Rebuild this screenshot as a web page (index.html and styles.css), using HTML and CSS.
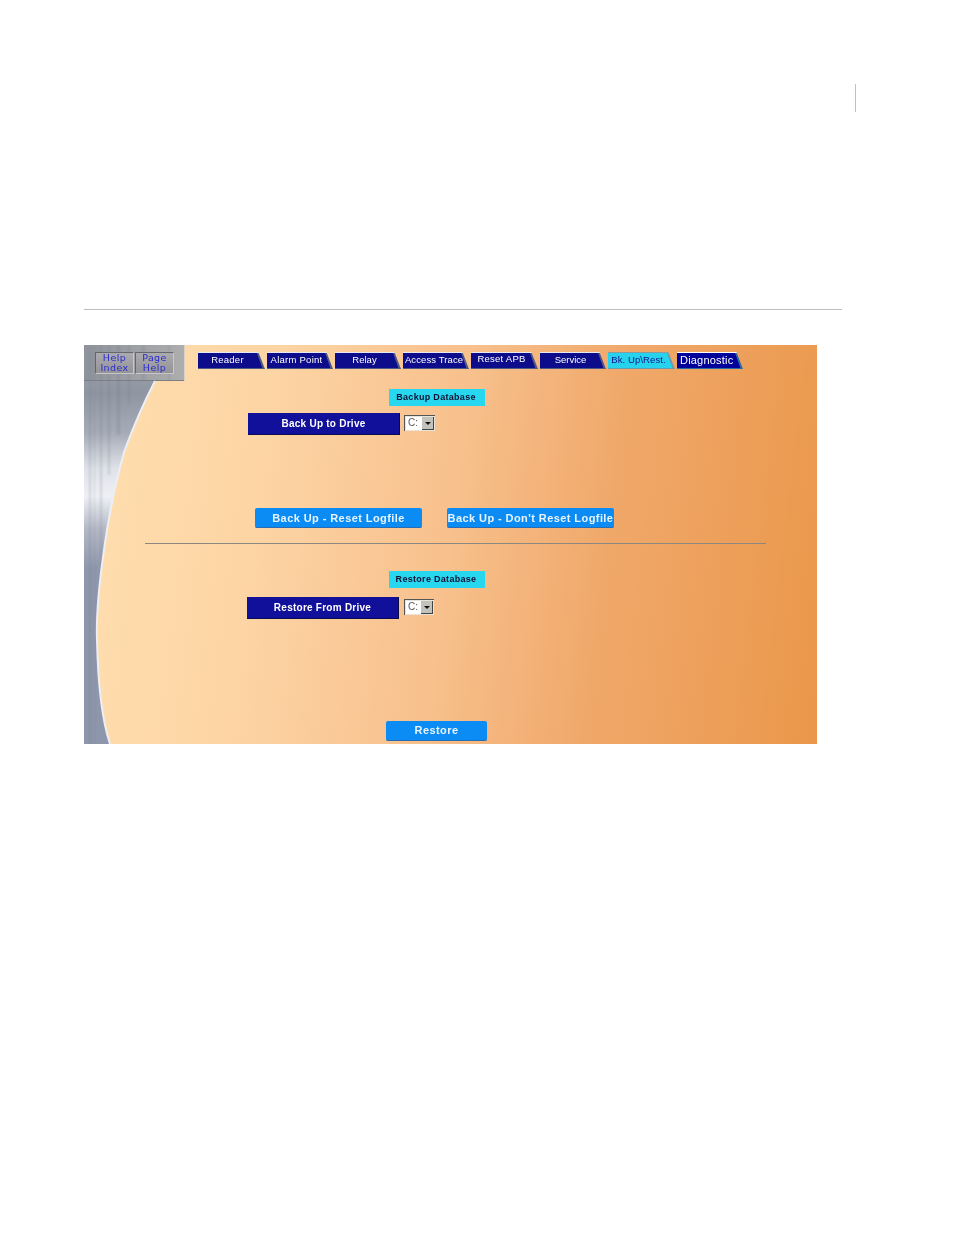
FILE: index.html
```html
<!DOCTYPE html>
<html lang="en">
<head>
  <meta charset="UTF-8">
  <title>Backup Database</title>
  <link rel="stylesheet" href="styles.css">
</head>
<body>
  <div class="page">
    <div class="page-tick"></div>
    <div class="page-rule"></div>

    <div class="panel">
      <!-- brushed metal strip behind the content -->
      <svg class="metal" width="733" height="399" viewBox="0 0 733 399">
        <defs>
          <linearGradient id="steel" x1="0" y1="0" x2="0" y2="1">
            <stop offset="0" stop-color="#a4a8ad"/>
            <stop offset="0.12" stop-color="#8f96a2"/>
            <stop offset="0.22" stop-color="#a5abb7"/>
            <stop offset="0.31" stop-color="#dfe2e8"/>
            <stop offset="0.38" stop-color="#eef0f4"/>
            <stop offset="0.46" stop-color="#b4b9c6"/>
            <stop offset="0.56" stop-color="#8f97ac"/>
            <stop offset="1" stop-color="#8e96ab"/>
          </linearGradient>
          <linearGradient id="cap" x1="0" y1="0" x2="1" y2="0">
            <stop offset="0" stop-color="#8f949c"/>
            <stop offset="0.6" stop-color="#a0a2a6"/>
            <stop offset="1" stop-color="#aeaeae"/>
          </linearGradient>
          <filter id="soft"><feGaussianBlur stdDeviation="1.2"/></filter>
        </defs>
        <path fill="url(#steel)" d="M0 0H101V36H71C60 57 50 80 40 107C30 143 24 175 20 205C15 240 12 270 13 295C14 340 18 375 26 399H0Z"/>
        <rect x="0" y="0" width="101" height="36" fill="url(#cap)"/>
        <rect x="0" y="35" width="101" height="1" fill="#7d7e84"/>
        <rect x="100" y="0" width="1" height="36" fill="#d8d2c6"/>
        <g fill="#6c7486" opacity="0.22" filter="url(#soft)">
          <rect x="5" y="0" width="2" height="399"/>
          <rect x="10" y="0" width="1" height="399"/>
          <rect x="16" y="0" width="2" height="220"/>
          <rect x="24" y="0" width="2" height="130"/>
          <rect x="33" y="0" width="3" height="90"/>
          <rect x="44" y="0" width="2" height="60"/>
          <rect x="58" y="0" width="3" height="35"/>
          <rect x="84" y="0" width="2" height="35"/>
        </g>
        <path class="metal-edge" d="M71 36C60 57 50 80 40 107C30 143 24 175 20 205C15 240 12 270 13 295C14 340 18 375 26 399"/>
      </svg>

      <div class="top-row">
        <div class="help-group">
          <a class="help-btn">Help<br>Index</a>
          <a class="help-btn">Page<br>Help</a>
        </div>
        <nav class="tabs">
          <a class="tab">Reader</a>
          <a class="tab tab-alarm">Alarm Point</a>
          <a class="tab tab-relay">Relay</a>
          <a class="tab tab-access">Access Trace</a>
          <a class="tab tab-reset">Reset APB</a>
          <a class="tab tab-service">Service</a>
          <a class="tab active">Bk. Up\Rest.</a>
          <a class="tab tab-diag">Diagnostic</a>
        </nav>
      </div>

      <section class="block block-backup">
        <div class="label">Backup Database</div>
        <div class="drive-row">
          <div class="drive-title">Back Up to Drive</div>
          <div class="drive-select"><span class="drive-value">C:</span><span class="drive-arrow"></span></div>
        </div>
        <div class="action-row">
          <button class="action">Back Up - Reset Logfile</button>
          <button class="action">Back Up - Don't Reset Logfile</button>
        </div>
      </section>

      <div class="divider"></div>

      <section class="block block-restore">
        <div class="label">Restore Database</div>
        <div class="drive-row drive-row-restore">
          <div class="drive-title">Restore From Drive</div>
          <div class="drive-select"><span class="drive-value">C:</span><span class="drive-arrow"></span></div>
        </div>
        <button class="action action-restore">Restore</button>
      </section>
    </div>
  </div>
</body>
</html>
```

FILE: styles.css
```css
* {
  box-sizing: border-box;
}

html, body {
  margin: 0;
  background-color: white;
}

.page {
  width: 954px;
  height: 1235px;
  padding: 84px 0 0 84px;
  font-family: "Liberation Sans", Arial, sans-serif;
}

.page-tick {
  width: 1px;
  height: 28px;
  margin-left: 771px;
  background-color: #b4c4dc;
}

.page-rule {
  width: 758px;
  height: 1px;
  margin-top: 197px;
  background-color: #bdbdbd;
}

.panel {
  position: relative;
  width: 733px;
  height: 399px;
  margin-top: 35px;
  overflow: hidden;
  background: linear-gradient(97deg, #ffdfb0 0%, #fdd4a4 25%, #f7c08c 50%, #f0a86a 70%, #ec9d55 90%, #eb974a 100%);
  filter: blur(0.35px);
}

.metal {
  position: absolute;
  top: 0;
  left: 0;
}

.metal-edge {
  fill: none;
  stroke: #eceef6;
  stroke-width: 2;
}

.top-row {
  position: relative;
  display: flex;
  padding: 7px 0 0 11px;
}

.help-group {
  display: flex;
  gap: 1px;
  width: 103px;
}

.help-btn {
  width: 39px;
  height: 22px;
  border: 1px solid #66676c;
  border-right-color: #c8c8c8;
  border-bottom-color: #c8c8c8;
  background: linear-gradient(#aaaaaf, #949498);
  color: #2c2cd0;
  font-family: "DejaVu Sans", sans-serif;
  font-size: 9.5px;
  letter-spacing: 0.4px;
  line-height: 10px;
  text-align: center;
  white-space: nowrap;
}

.tabs {
  display: flex;
  gap: 2px;
}

.tab {
  position: relative;
  z-index: 0;
  width: 66px;
  height: 17px;
  padding-right: 8px;
  background: linear-gradient(to bottom, #e8e8f0 1px, #4e5a84 1px);
  clip-path: polygon(0 0, 90% 0, 100% 100%, 0 100%);
  color: white;
  font-size: 9.5px;
  letter-spacing: 0.25px;
  line-height: 16px;
  text-align: center;
  white-space: nowrap;
}

.tab::before {
  content: "";
  position: absolute;
  z-index: -1;
  top: 1px;
  left: 0;
  right: 0;
  bottom: 1px;
  background-color: #0d0d8c;
  clip-path: polygon(0 0, 88% 0, 96% 100%, 0 100%);
}

.tab:first-child,
.tab-reset,
.tab.active {
  width: 67px;
}

.tab-alarm {
  padding-right: 7px;
}

.tab-relay {
  padding-right: 7px;
  letter-spacing: 0;
}

.tab-access {
  padding-right: 4px;
  letter-spacing: 0.1px;
}

.tab-reset {
  padding-right: 6px;
  line-height: 14px;
}

.tab-service {
  padding-right: 5px;
  letter-spacing: 0;
}

.tab.active {
  padding-right: 6px;
  background: linear-gradient(to bottom, #8a9aa0 2px, #6a9ab0 2px);
  color: #14148c;
  font-size: 9.5px;
  letter-spacing: 0.1px;
}

.tab.active::before {
  background-color: #27d3ec;
}

.tab-diag {
  padding: 0 0 0 3px;
  background: linear-gradient(to bottom, white 1px, #2a6a9c 1px);
  font-size: 11px;
  letter-spacing: 0.2px;
  line-height: 16px;
  text-align: left;
}

.tab-diag::before {
  background-color: #00009a;
}

.block {
  position: relative;
}

.label {
  width: 96px;
  height: 17px;
  margin-left: 305px;
  padding-right: 2px;
  background-color: #27d6ef;
  color: #111133;
  font-size: 9px;
  font-weight: bold;
  letter-spacing: 0.3px;
  line-height: 17px;
  text-align: center;
  white-space: nowrap;
}

.block-backup {
  padding-top: 15px;
}

.block-restore {
  padding-top: 27px;
}

.drive-row {
  display: flex;
  align-items: flex-start;
  margin: 7px 0 0 164px;
}

.drive-row-restore {
  margin: 9px 0 0 163px;
}

.drive-title {
  width: 152px;
  height: 22px;
  background-color: #10109a;
  border-right: 1px solid #0a0a40;
  border-bottom: 1px solid #0a0a50;
  color: white;
  font-size: 10px;
  font-weight: bold;
  letter-spacing: 0.25px;
  line-height: 21px;
  text-align: center;
}

.drive-select {
  display: flex;
  width: 31px;
  height: 16px;
  margin: 2px 0 0 4px;
  padding: 1px;
  background-color: #e8e4da;
  border-top: 1px solid #555;
  border-left: 1px solid #555;
}

.drive-row-restore .drive-select {
  margin-left: 5px;
  width: 30px;
}

.drive-value {
  flex: 1;
  background-color: white;
  color: #555;
  font-size: 10px;
  line-height: 12px;
  padding-left: 2px;
}

.drive-arrow {
  position: relative;
  width: 12px;
  background-color: #c4c2bc;
  border-right: 1px solid #444;
  border-bottom: 1px solid #444;
}

.drive-arrow::after {
  content: "";
  position: absolute;
  top: 5px;
  left: 3px;
  border-left: 3px solid transparent;
  border-right: 3px solid transparent;
  border-top: 3px solid #111;
}

.action-row {
  display: flex;
  gap: 25px;
  margin: 73px 0 0 171px;
}

.action {
  width: 167px;
  height: 20px;
  padding: 0;
  border: none;
  border-bottom: 1px solid #2a6cb4;
  border-radius: 2px;
  background-color: #0a8cf4;
  color: #e8f4ff;
  font-family: "Liberation Sans", Arial, sans-serif;
  font-size: 11px;
  font-weight: bold;
  letter-spacing: 0.42px;
  white-space: nowrap;
}

.action-restore {
  display: block;
  width: 101px;
  margin: 102px 0 0 302px;
  padding-bottom: 2px;
}

.divider {
  position: relative;
  width: 621px;
  height: 1px;
  margin: 15px 0 0 61px;
  background-color: #8a8880;
}
```
